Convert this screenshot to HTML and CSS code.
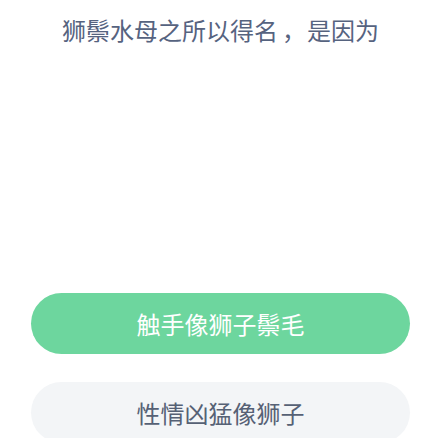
FILE: index.html
```html
<!DOCTYPE html>
<html lang="zh-CN">
<head>
  <meta charset="UTF-8" />
  <meta name="viewport" content="width=device-width, initial-scale=1.0"/>
  <title>答题</title>
  <link rel="stylesheet" href="styles.css">
</head>
<body>
  <div class="quiz">
    <div class="question">狮鬃水母之所以得名<span class="comma">，</span>是因为</div>
    <div class="options">
      <div class="option option-right">触手像狮子鬃毛</div>
      <div class="option">性情凶猛像狮子</div>
    </div>
  </div>
</body>
</html>
```

FILE: styles.css
```css
body {
  margin: 0;
  padding: 0;
  background-color: #ffffff;
  font-family: "Noto Sans CJK SC", "Noto Sans", sans-serif;
  overflow: hidden;
}

.quiz {
  padding: 14px 17px 0 31px;
}

.question {
  font-size: 24px;
  line-height: 32px;
  color: #56637f;
  text-align: center;
}

.comma {
  font-family: "Noto Sans CJK TC", sans-serif;
  margin: 0 1px 0 4px;
}

.options {
  display: flex;
  flex-direction: column;
  gap: 28px;
  margin-top: 247px;
}

.option {
  height: 61px;
  border-radius: 31px;
  background-color: #f3f5f7;
  color: #566175;
  font-size: 24px;
  display: flex;
  align-items: center;
  justify-content: center;
}

.option-right {
  background-color: #6dd69e;
  color: #ffffff;
}
```
